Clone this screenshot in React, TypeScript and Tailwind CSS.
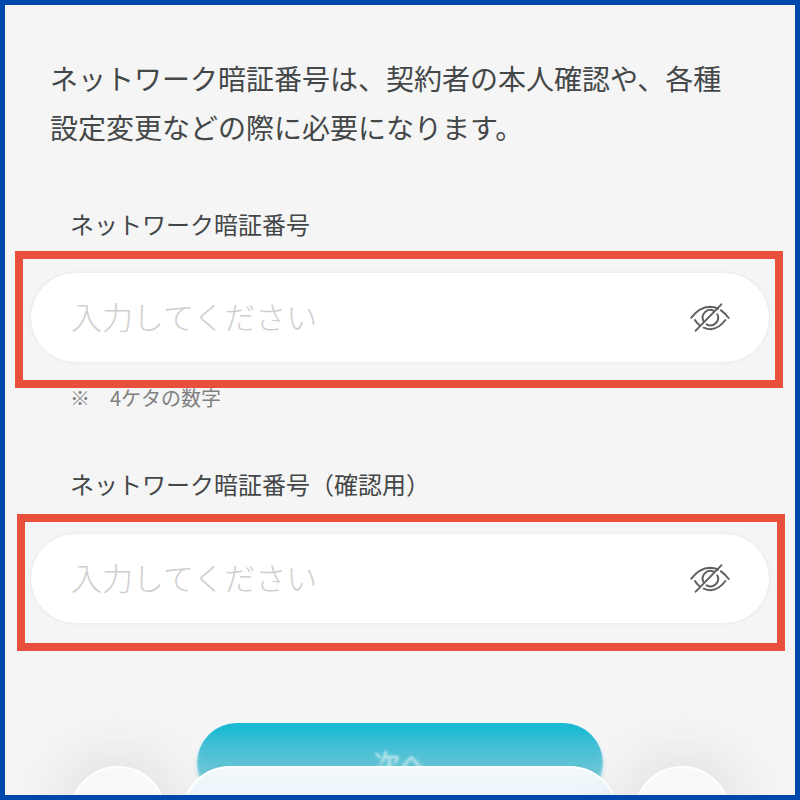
import { useState } from "react";

function EyeOffIcon() {
  return (
    <svg
      viewBox="0 0 120 90"
      className="h-[30px] w-10"
      fill="none"
      stroke="#606060"
      strokeWidth="6"
      strokeLinecap="round"
      aria-hidden="true"
    >
      <path d="M4 44 Q28 12 60 11 Q74 11 84 17" />
      <path d="M93 22 Q106 31 116 45" />
      <path d="M15 51 Q20 60 28 66" />
      <path d="M41 74 Q52 79 62 79 Q88 76 106 51" />
      <path d="M17 83 L94 4" />
      <path d="M41 55 A23 23 0 0 1 71 23" />
      <path d="M82 34 A23 23 0 0 1 50 64" />
    </svg>
  );
}

interface PinFieldProps {
  id: string;
  className: string;
}

function PinField({ id, className }: PinFieldProps) {
  const [visible, setVisible] = useState(false);
  return (
    <div className={`border-8 border-[#e94f3d] ${className}`}>
      <div className="flex h-[91px] items-center rounded-full border border-[#eeeeee] bg-white pr-[39px] pl-10 shadow-[0_0_3px_rgba(0,0,0,0.05)]">
        <input
          id={id}
          type={visible ? "text" : "password"}
          inputMode="numeric"
          maxLength={4}
          placeholder="入力してください"
          className="h-full min-w-0 flex-1 bg-transparent pb-1 text-[31px] font-light text-[#444748] outline-none placeholder:text-[#cfcfcf]"
        />
        <button type="button" aria-label="表示を切り替える" onClick={() => setVisible(!visible)}>
          <EyeOffIcon />
        </button>
      </div>
    </div>
  );
}

export default function App() {
  return (
    <div className="relative flex h-screen flex-col overflow-hidden border-[5px] border-[#0047ab] bg-[#f5f5f5] font-['Noto_Sans_CJK_JP',sans-serif] text-[#444748]">
      <main className="flex flex-col pt-[49px]">
        <p className="pr-10 pl-[45px] text-[28px] leading-[49px]">
          ネットワーク暗証番号は、契約者の本人確認や、各種
          <br />
          設定変更などの際に必要になります。
        </p>

        <form className="flex flex-col" onSubmit={(event) => event.preventDefault()}>
          <label htmlFor="pin" className="mt-14 ml-[65px] text-2xl leading-8">
            ネットワーク暗証番号
          </label>
          <PinField id="pin" className="mt-[11px] mr-3 ml-[10px] pt-[13px] pr-[5px] pb-[17px] pl-[7px]" />
          <p className="ml-[65px] text-[20px] leading-5 text-[#808080]">※　4ケタの数字</p>

          <label htmlFor="pin-confirm" className="mt-[60px] ml-[65px] text-2xl leading-8">
            ネットワーク暗証番号（確認用）
          </label>
          <PinField id="pin-confirm" className="mt-[14px] mr-[10px] ml-3 pt-[11px] pr-[7px] pb-[19px] pl-[5px]" />

          <button
            type="submit"
            className="mx-48 mt-[72px] h-20 rounded-full bg-linear-to-b from-[#1dbad4] from-10% to-[#78cbd8] to-75% text-[27px] text-white/80"
          >
            <span className="blur-[1px]">次へ</span>
          </button>
        </form>
      </main>

      <div className="pointer-events-none absolute inset-x-0 bottom-0 h-14 mask-t-from-0% mask-t-to-100% backdrop-blur-[2px]" />

      <nav className="absolute inset-x-0 bottom-0 flex h-[29px] items-start gap-4 px-[65px]">
        <button
          type="button"
          aria-label="戻る"
          className="size-24 shrink-0 rounded-full border-2 border-white bg-[#f9f9f9] shadow-[0_0_70px_4px_rgba(0,0,0,0.12)]"
        />
        <button
          type="button"
          aria-label="アドレスバー"
          className="h-24 flex-1 rounded-full border-2 border-white bg-linear-to-b from-[#f3f8fa] to-[#ebf6fb] to-30% shadow-[0_0_20px_rgba(0,0,0,0.03)]"
        />
        <button
          type="button"
          aria-label="メニュー"
          className="size-24 shrink-0 rounded-full border-2 border-white bg-[#f9f9f9] shadow-[0_0_70px_4px_rgba(0,0,0,0.12)]"
        />
      </nav>
    </div>
  );
}
